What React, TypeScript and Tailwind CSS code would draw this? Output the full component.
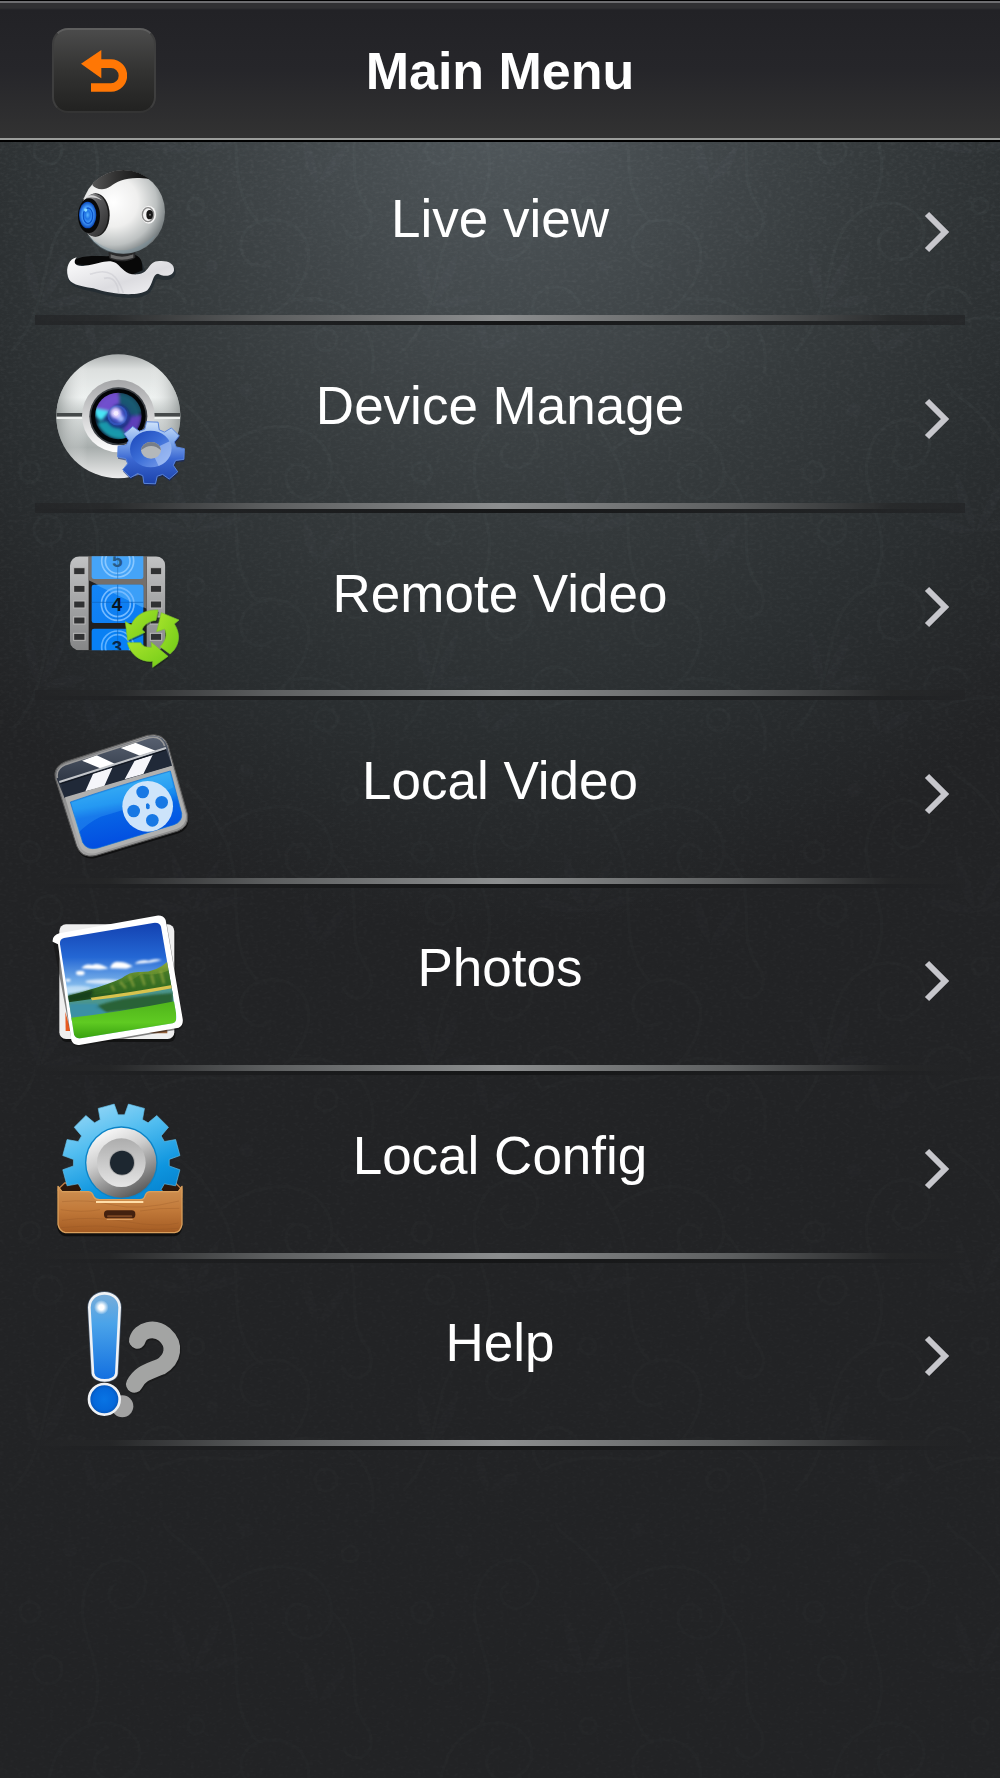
import React from "react";

type IconProps = { viewBox: string; children: React.ReactNode };

function IconFrame({ viewBox, children }: IconProps) {
  return (
    <svg viewBox={viewBox} className="size-40 shrink-0 overflow-visible" aria-hidden="true">
      {children}
    </svg>
  );
}

function gearPath(cx: number, cy: number, rIn: number, rOut: number, teeth: number, start: number, base = 0.3, tip = 0.21) {
  const step = (Math.PI * 2) / teeth;
  const pts: string[] = [];
  for (let i = 0; i < teeth; i++) {
    const a = start + i * step;
    const corners: [number, number][] = [
      [rIn, a - step * base],
      [rOut, a - step * tip],
      [rOut, a + step * tip],
      [rIn, a + step * base],
    ];
    corners.forEach(([r, t]) => pts.push(`${(cx + r * Math.cos(t)).toFixed(1)} ${(cy + r * Math.sin(t)).toFixed(1)}`));
  }
  return `M${pts.join("L")}Z`;
}

function WebcamIcon() {
  return (
    <IconFrame viewBox="0 5 480 480">
      <defs>
        <radialGradient id="wcBall" cx="38%" cy="38%" r="66%">
          <stop offset="0" stopColor="#fff" />
          <stop offset=".45" stopColor="#efefee" />
          <stop offset=".78" stopColor="#bdc1c1" />
          <stop offset="1" stopColor="#747b7d" />
        </radialGradient>
        <linearGradient id="wcCap" x1="0" y1="0" x2="1" y2="0">
          <stop offset="0" stopColor="#555" />
          <stop offset=".4" stopColor="#333" />
          <stop offset="1" stopColor="#0c0c0c" />
        </linearGradient>
        <linearGradient id="wcRing" x1="0" y1="0" x2="1" y2="1">
          <stop offset="0" stopColor="#bbb" />
          <stop offset=".4" stopColor="#5a5a5c" />
          <stop offset="1" stopColor="#2a2a2a" />
        </linearGradient>
        <radialGradient id="wcLens">
          <stop offset="0" stopColor="#5ab5ff" />
          <stop offset=".3" stopColor="#1f74e4" />
          <stop offset=".6" stopColor="#4aa3ff" />
          <stop offset="1" stopColor="#0a48b8" />
        </radialGradient>
        <linearGradient id="wcBase" x1="0" y1="0" x2="1" y2="1">
          <stop offset="0" stopColor="#fff" />
          <stop offset=".6" stopColor="#dcdce0" />
          <stop offset="1" stopColor="#f5f5f7" />
        </linearGradient>
        <clipPath id="wcClip"><circle cx="250" cy="185" r="126" /></clipPath>
      </defs>
      <path d="M84 388C70 352 86 326 112 319C160 310 250 312 292 318C310 330 304 350 318 358C332 352 338 336 352 334C382 326 404 340 403 362C400 384 366 386 352 378C338 376 340 410 320 424C290 444 220 436 160 418C118 409 92 404 84 388Z" fill="#222b31" opacity=".75" transform="translate(4 7)" />
      <path d="M100 342C100 322 130 315 200 318L286 314C308 322 306 342 308 360L268 376L230 350Z" fill="#080808" />
      <path d="M84 380C76 350 88 326 110 321C96 338 108 350 134 346C180 340 204 324 228 338C250 356 256 374 292 372C330 370 322 332 358 332C384 330 404 340 402 360C398 382 366 378 354 370C338 370 340 400 322 420C292 440 214 432 160 414C116 406 90 402 84 380Z" fill="url(#wcBase)" />
      <path d="M150 372C210 350 232 376 250 428M192 384C220 376 234 400 236 430" stroke="#c4c4ca" strokeWidth="5" fill="none" opacity=".45" />
      <path d="M205 306H286V322C260 338 224 334 208 324Z" fill="#29292a" />
      <path d="M212 312Q246 326 280 312V322Q246 334 212 322Z" fill="#6a6a6a" />
      <circle cx="250" cy="185" r="125" fill="url(#wcBall)" />
      <path d="M140 250Q240 350 350 250Q310 314 245 310Q180 310 140 250Z" fill="#7996a3" opacity=".35" />
      <g clipPath="url(#wcClip)">
        <path d="M157 104C160 66 220 50 260 54C300 56 326 70 328 86C270 76 232 90 212 108C190 124 166 116 157 104Z" fill="url(#wcCap)" />
      </g>
      <ellipse cx="167" cy="194" rx="42" ry="65" fill="#191919" />
      <ellipse cx="163" cy="194" rx="41" ry="64" fill="url(#wcRing)" />
      <path d="M128 146Q154 122 186 150Q156 134 128 146Z" fill="#e8e8e8" opacity=".8" />
      <ellipse cx="147" cy="196" rx="33" ry="52" fill="#090909" />
      <ellipse cx="143" cy="194" rx="26" ry="40" fill="url(#wcLens)" />
      <ellipse cx="144" cy="196" rx="14" ry="23" fill="none" stroke="#0d53c8" strokeWidth="4" />
      <circle cx="137" cy="179" r="5" fill="#8bdcff" />
      <ellipse cx="326" cy="193" rx="22" ry="27" fill="#f4f4f4" />
      <ellipse cx="324" cy="193" rx="17" ry="21" fill="none" stroke="#888" strokeWidth="4" />
      <ellipse cx="329" cy="193" rx="10" ry="14" fill="#161616" />
      <circle cx="330" cy="193" r="3" fill="#777" />
    </IconFrame>
  );
}

function DeviceIcon() {
  const gear = gearPath(333, 338, 78, 101, 8, 0.04, 0.36, 0.22);
  return (
    <IconFrame viewBox="0 -3 480 480">
      <defs>
        <linearGradient id="dvBody" x1="0" y1="0" x2="0" y2="1">
          <stop offset="0" stopColor="#a9adad" />
          <stop offset=".12" stopColor="#dcdfde" />
          <stop offset=".35" stopColor="#edf1f0" />
          <stop offset=".48" stopColor="#bcc2c1" />
          <stop offset=".52" stopColor="#d0d5d4" />
          <stop offset=".75" stopColor="#a7adac" />
          <stop offset="1" stopColor="#ececec" />
        </linearGradient>
        <linearGradient id="dvSide" x1="0" y1="0" x2="1" y2="0">
          <stop offset="0" stopColor="#8b9190" stopOpacity=".75" />
          <stop offset=".25" stopColor="#fff" stopOpacity="0" />
          <stop offset=".75" stopColor="#fff" stopOpacity="0" />
          <stop offset="1" stopColor="#8b9190" stopOpacity=".75" />
        </linearGradient>
        <linearGradient id="dvRing" x1="0" y1="0" x2="0" y2="1">
          <stop offset="0" stopColor="#a5a6a8" />
          <stop offset="1" stopColor="#fff" />
        </linearGradient>
        <radialGradient id="dvLens">
          <stop offset="0" stopColor="#b9a6ff" />
          <stop offset=".2" stopColor="#4655c8" />
          <stop offset=".5" stopColor="#17307d" />
          <stop offset=".8" stopColor="#175a78" />
          <stop offset="1" stopColor="#0b1930" />
        </radialGradient>
        <linearGradient id="dvGear" x1="0" y1="0" x2="0" y2="1">
          <stop offset="0" stopColor="#cfe3fb" />
          <stop offset=".3" stopColor="#86aeee" />
          <stop offset=".6" stopColor="#3b68d2" />
          <stop offset="1" stopColor="#1c43ac" />
        </linearGradient>
        <linearGradient id="dvGearIn" x1="0" y1="0" x2="1" y2="1">
          <stop offset="0" stopColor="#1945b8" />
          <stop offset=".5" stopColor="#3d6fd8" />
          <stop offset="1" stopColor="#83a6ee" />
        </linearGradient>
        <clipPath id="dvLensClip"><circle cx="235" cy="228" r="70" /></clipPath>
        <filter id="dvBlend"><feGaussianBlur stdDeviation="5" /></filter>
      </defs>
      <circle cx="235" cy="229" r="186" fill="url(#dvBody)" />
      <circle cx="235" cy="229" r="186" fill="url(#dvSide)" />
      <path d="M50 219H134V230H50ZM336 219H420V230H336Z" fill="#45494a" />
      <path d="M50 230H134V237H50ZM336 230H420V237H336Z" fill="#edf0ef" />
      <circle cx="235" cy="228" r="109" fill="url(#dvRing)" />
      <circle cx="235" cy="229" r="87" fill="#3b3f44" />
      <circle cx="235" cy="229" r="82" fill="#020406" />
      <circle cx="235" cy="228" r="70" fill="url(#dvLens)" />
      <g clipPath="url(#dvLensClip)">
        <g filter="url(#dvBlend)">
          <path d="M235 150A78 78 0 0 0 162 205L208 218Q218 194 238 192Z" fill="#7a4fd6" opacity=".9" />
          <path d="M165 205L208 214L186 240Q162 236 165 205Z" fill="#4ae4f5" />
          <path d="M238 156Q296 160 308 218L270 224Q264 196 238 192Z" fill="#1c5a70" opacity=".8" />
          <path d="M306 224Q300 280 262 290L248 266Q268 254 272 230Z" fill="#6a3cc4" opacity=".85" />
          <path d="M172 250Q200 304 262 298L242 266Q212 266 202 244Z" fill="#17a5b4" opacity=".85" />
        </g>
        <circle cx="232" cy="226" r="27" fill="none" stroke="#3558c0" strokeWidth="6" opacity=".8" />
        <g filter="url(#dvBlend)">
          <circle cx="227" cy="218" r="16" fill="#e0d0ff" />
          <circle cx="243" cy="236" r="9" fill="#a7bfff" />
        </g>
        <circle cx="228" cy="220" r="7" fill="#f4ecff" />
      </g>
      <g transform="translate(0 24) scale(1 .93)">
        <path d={gear} fill="#10256b" opacity=".6" transform="translate(1 6)" />
        <path d={gear} fill="url(#dvGear)" stroke="#5a86dc" strokeWidth="3" strokeLinejoin="round" />
      </g>
      <ellipse cx="332" cy="327" rx="62" ry="55" fill="url(#dvGearIn)" />
      <path d="M333 330L389 304A62 55 0 0 1 356 378Z" fill="#bcd3fb" opacity=".55" />
      <ellipse cx="333" cy="331" rx="30" ry="25" fill="#b4b8ba" />
      <path d="M303 331A30 25 0 0 1 363 331Q334 305 303 331Z" fill="#777e88" />
    </IconFrame>
  );
}

function RemoteVideoIcon() {
  const arrow = "M256 274L274 284C286 252 318 238 354 239L348 270C326 272 312 284 306 298L315 306L263 330Z";
  return (
    <IconFrame viewBox="0 -10 480 480">
      <defs>
        <linearGradient id="rvStrip" x1="0" y1="0" x2="0" y2="1">
          <stop offset="0" stopColor="#c2c3c4" />
          <stop offset="1" stopColor="#858687" />
        </linearGradient>
        <linearGradient id="rvBlue" x1="0" y1="0" x2="1" y2="1">
          <stop offset="0" stopColor="#1485f5" />
          <stop offset="1" stopColor="#0a7bf0" />
        </linearGradient>
        <linearGradient id="rvGreen" x1="0" y1="0" x2="1" y2="1">
          <stop offset="0" stopColor="#a8e42c" />
          <stop offset="1" stopColor="#72cb18" />
        </linearGradient>
        <clipPath id="rvClip"><rect x="90" y="78" width="286" height="282" rx="28" /></clipPath>
        <clipPath id="rvF1"><rect x="155" y="70" width="155" height="76" rx="7" /></clipPath>
        <clipPath id="rvF3"><rect x="155" y="295" width="155" height="76" rx="7" /></clipPath>
      </defs>
      <g clipPath="url(#rvClip)">
        <rect x="90" y="78" width="286" height="282" fill="url(#rvStrip)" />
        <rect x="146" y="78" width="174" height="282" fill="#211f1e" />
        <path d="M146 78H320V235L146 150Z" fill="#746f6b" />
        <rect x="155" y="70" width="155" height="76" rx="7" fill="#45a4f8" />
        <rect x="155" y="163" width="155" height="115" rx="7" fill="url(#rvBlue)" />
        <path d="M168 163H303Q310 163 310 170V232Z" fill="#3b9ff8" />
        <rect x="155" y="295" width="155" height="76" rx="7" fill="#0880f4" />
        <g clipPath="url(#rvF1)" fill="none" stroke="#8ac8ff" strokeWidth="5">
          <circle cx="233" cy="92" r="48" /><circle cx="233" cy="92" r="37" />
          <path d="M233 70V146" stroke="#2d78c0" strokeWidth="2" />
        </g>
        <g fill="none" stroke="#74baff" strokeWidth="5">
          <circle cx="233" cy="221" r="49" /><circle cx="233" cy="221" r="38" />
          <path d="M155 216H310M233 163V278" stroke="#0d64bd" strokeWidth="2" />
        </g>
        <g clipPath="url(#rvF3)" fill="none" stroke="#60b2ff" strokeWidth="5">
          <circle cx="233" cy="350" r="48" /><circle cx="233" cy="350" r="37" />
          <path d="M233 295V360" stroke="#0d64bd" strokeWidth="2" />
        </g>
        <g fontFamily="Liberation Sans, sans-serif" fontSize="56" fontWeight="bold" textAnchor="middle">
          <text x="232" y="110" fill="#285a86">5</text>
          <text x="231" y="241" fill="#081521">4</text>
          <text x="231" y="372" fill="#082648">3</text>
        </g>
        <g fill="#303132" stroke="#bababa" strokeWidth="3">
          {[112, 165, 212, 260, 309].map((y) => (
            <g key={y}>
              <rect x="101" y={y} width="34" height="21" />
              <rect x="331" y={y} width="34" height="21" />
            </g>
          ))}
        </g>
      </g>
      <g fill="#10220a" opacity=".45" transform="translate(3 5)">
        <path d={arrow} />
        <path d="M262 337H302C310 350 320 351 334 351V336L384 378L338 411V393C302 396 272 374 262 337Z" />
      </g>
      <g fill="url(#rvGreen)" stroke="#7cc62a" strokeWidth="2" strokeLinejoin="round">
        <path d={arrow} />
        <path d="M262 337H302C310 350 320 351 334 351V336L384 378L338 411V393C302 396 272 374 262 337Z" />
        <path d="M364 247L417 269L403 281C426 316 415 352 390 371L360 349C378 332 382 314 374 296L350 304Z" />
      </g>
    </IconFrame>
  );
}

function ClapperIcon() {
  return (
    <IconFrame viewBox="0 -4 480 480">
      <defs>
        <linearGradient id="clBlue" x1="0" y1="0" x2=".25" y2="1">
          <stop offset="0" stopColor="#43bdf6" />
          <stop offset=".48" stopColor="#168aef" />
          <stop offset=".6" stopColor="#0764e6" />
          <stop offset="1" stopColor="#024de0" />
        </linearGradient>
        <linearGradient id="clTop" x1="0" y1="0" x2="0" y2="1">
          <stop offset="0" stopColor="#626b7b" />
          <stop offset="1" stopColor="#1c2431" />
        </linearGradient>
        <linearGradient id="clRim" x1="0" y1="0" x2="1" y2="1">
          <stop offset="0" stopColor="#6c6c6c" />
          <stop offset=".5" stopColor="#a5a5a5" />
          <stop offset="1" stopColor="#858585" />
        </linearGradient>
        <clipPath id="clShape"><path d="M50 190Q42 158 76 146L325 64Q368 54 382 92L396 152L74 248Z" /></clipPath>
      </defs>
      <path d="M46 190Q38 154 76 139L322 60Q370 50 384 90L443 298Q448 333 414 347L166 421Q124 430 110 392Z" fill="#080808" opacity=".7" transform="translate(2 7)" />
      <path d="M46 190Q38 154 76 139L322 60Q370 50 384 90L443 298Q448 333 414 347L166 421Q124 430 110 392Z" fill="url(#clRim)" stroke="#555" strokeWidth="3" />
      <g clipPath="url(#clShape)">
        <path d="M40 140L400 30V170L60 260Z" fill="url(#clTop)" />
        <path d="M62 202L378 100L396 152L74 248Z" fill="#202938" />
        <path d="M126 136L170 120L226 146L184 160ZM242 98L286 82L347 106L300 121Z" fill="#fff" />
        <path d="M160 174L218 156L192 214L136 228ZM284 136L338 119L310 176L254 192Z" fill="#f5f6fa" />
        <path d="M58 200L378 98" stroke="#c3c6ca" strokeWidth="6" />
        <path d="M60 206L378 104" stroke="#11161e" strokeWidth="3" />
      </g>
      <path d="M52 188Q46 160 78 147L324 68Q362 58 374 92" fill="none" stroke="#999" strokeWidth="5" />
      <path d="M75 246L396 151L438 300Q440 330 410 341L168 413Q132 421 119 390Z" fill="#b0b0af" />
      <path d="M91 260Q230 212 391 167L425 294Q428 319 402 328L174 398Q140 406 128 381Z" fill="url(#clBlue)" stroke="#0a70d6" strokeWidth="2" />
      <path d="M94 262Q230 218 388 171L400 216Q280 280 182 304Q140 324 114 354Z" fill="#5ed1ff" opacity=".2" />
      <circle cx="323" cy="273" r="76" fill="#cde4fa" />
      <g fill="#1778e4">
        <circle cx="308" cy="230" r="19" />
        <circle cx="365" cy="261" r="19" />
        <circle cx="337" cy="315" r="19" />
        <circle cx="281" cy="287" r="19" />
        <path d="M318 267Q324 259 329 270V279Q322 286 318 277Z" />
      </g>
    </IconFrame>
  );
}

function PhotosIcon() {
  return (
    <IconFrame viewBox="0 2 480 480">
      <defs>
        <linearGradient id="phSky" x1="0" y1="0" x2="0" y2="1">
          <stop offset="0" stopColor="#123fae" />
          <stop offset=".3" stopColor="#2467d4" />
          <stop offset=".6" stopColor="#a0d4f4" />
        </linearGradient>
        <linearGradient id="phHill" x1="0" y1="0" x2="0" y2="1">
          <stop offset="0" stopColor="#8faa38" />
          <stop offset=".5" stopColor="#3d7426" />
          <stop offset="1" stopColor="#18451b" />
        </linearGradient>
        <linearGradient id="phGrass" x1="0" y1="0" x2="0" y2="1">
          <stop offset="0" stopColor="#4fb31b" />
          <stop offset=".5" stopColor="#5fca22" />
          <stop offset="1" stopColor="#2b9409" />
        </linearGradient>
        <clipPath id="phClip"><path d="M60 132Q58 117 72 113L344 67Q359 66 363 79L410 349Q410 365 398 369L122 414Q106 416 102 402Z" /></clipPath>
        <filter id="phSoft"><feGaussianBlur stdDeviation="3" /></filter>
      </defs>
      <rect x="60" y="75" width="344" height="344" rx="18" fill="#080808" opacity=".6" transform="translate(2 6)" />
      <rect x="58" y="72" width="345" height="344" rx="20" fill="#efefef" />
      <path d="M76 334L92 392L77 392Z" fill="#e65a20" />
      <path d="M320 397L382 384V399H340Z" fill="#95613b" />
      <path d="M38 124Q36 106 58 99L350 46Q370 44 377 59L428 355Q431 374 416 382L122 433Q100 437 94 420Z" fill="#111" opacity=".5" transform="translate(2 5)" />
      <path d="M38 124Q36 106 58 99L350 46Q370 44 377 59L428 355Q431 374 416 382L122 433Q100 437 94 420L54 132Z" fill="#fff" />
      <g clipPath="url(#phClip)">
        <rect x="50" y="60" width="370" height="370" fill="url(#phSky)" />
        <g fill="#fff" filter="url(#phSoft)">
          <path d="M124 204Q135 188 158 194Q173 185 205 204Q190 211 124 204ZM210 204Q216 181 238 185Q255 184 278 198L260 205ZM284 190Q300 177 326 181Q344 173 366 179Q340 188 284 190Z" />
          <ellipse cx="121" cy="218" rx="13" ry="7" /><ellipse cx="190" cy="244" rx="54" ry="7" opacity=".7" />
          <ellipse cx="110" cy="268" rx="45" ry="12" opacity=".4" /><ellipse cx="84" cy="240" rx="8" ry="4" />
        </g>
        <path d="M80 288Q122 278 144 270Q212 250 245 234Q272 212 302 215Q350 215 382 184L410 280L90 315Z" fill="url(#phHill)" />
        <path d="M160 280Q250 262 304 220Q350 228 390 208L400 255L270 274Z" fill="#356d22" opacity=".65" />
        <g filter="url(#phSoft)">
          <path d="M240 244l18 20M268 226l14 34M302 219l12 36M334 222l8 30M362 212l10 38M214 255l9 16" stroke="#b3b94b" strokeWidth="8" opacity=".5" />
          <path d="M80 286Q130 276 160 268L150 296L86 304Z" fill="#17401c" />
        </g>
        <path d="M86 306Q250 284 400 258V340L90 365Z" fill="#4c968e" />
        <path d="M165 320Q220 292 398 278V318L200 336Z" fill="#285c2d" opacity=".9" filter="url(#phSoft)" />
        <path d="M90 310H170L210 350H90Z" fill="#348eb0" opacity=".7" filter="url(#phSoft)" />
        <path d="M152 292Q280 275 396 254V264Q270 288 156 300Z" fill="#d8c34d" />
        <path d="M88 353Q240 335 408 302V430H90Z" fill="url(#phGrass)" />
      </g>
    </IconFrame>
  );
}

function ConfigIcon() {
  return (
    <IconFrame viewBox="0 -4 480 480">
      <defs>
        <linearGradient id="cfGear" x1="0" y1="0" x2=".4" y2="1">
          <stop offset="0" stopColor="#a5ddf8" />
          <stop offset=".4" stopColor="#51bdf0" />
          <stop offset=".75" stopColor="#0e95df" />
          <stop offset="1" stopColor="#0580cc" />
        </linearGradient>
        <linearGradient id="cfRing" x1=".2" y1="0" x2=".7" y2="1">
          <stop offset="0" stopColor="#fff" />
          <stop offset=".4" stopColor="#cecece" />
          <stop offset="1" stopColor="#555" />
        </linearGradient>
        <linearGradient id="cfInner" x1="0" y1="0" x2="0" y2="1">
          <stop offset="0" stopColor="#adadad" />
          <stop offset="1" stopColor="#e5e5e5" />
        </linearGradient>
        <linearGradient id="cfWood" x1="0" y1="0" x2="0" y2="1">
          <stop offset="0" stopColor="#cf9153" />
          <stop offset=".5" stopColor="#c27a3a" />
          <stop offset="1" stopColor="#a35b23" />
        </linearGradient>
        <clipPath id="cfTop"><rect x="40" y="30" width="400" height="297" /></clipPath>
      </defs>
      <path d="M55 296L74 278H406L425 296V320H55Z" fill="#2c170b" stroke="#bd7b43" strokeWidth="4" />
      <g clipPath="url(#cfTop)">
        <path d={gearPath(244, 217, 144, 177, 12, Math.PI / 12, 0.37, 0.27)} fill="url(#cfGear)" stroke="#63bce6" strokeWidth="2" strokeLinejoin="round" />
        <circle cx="244" cy="217" r="109" fill="#0b83c6" />
        <circle cx="244" cy="217" r="105" fill="url(#cfRing)" />
        <circle cx="244" cy="217" r="73" fill="url(#cfInner)" />
        <circle cx="246" cy="217" r="39" fill="#aaa" />
        <circle cx="246" cy="217" r="36" fill="#1d2730" />
      </g>
      <path d="M52 297H146L162 327H312L328 304H427V407Q423 430 402 433H75Q56 428 52 407Z" fill="#080808" opacity=".75" transform="translate(0 5)" />
      <path d="M54 288L66 304H146Q157 305 161 319Q166 328 178 328H300Q312 328 315 317Q319 304 330 304H415L426 288V402Q422 425 404 427H76Q58 423 54 402Z" fill="url(#cfWood)" stroke="#d99f5c" strokeWidth="4" strokeLinejoin="round" />
      <g fill="none" stroke="#8e5125" strokeWidth="3" opacity=".28">
        <path d="M66 334Q146 326 220 344T417 332M62 358Q126 368 180 358M300 362Q360 352 418 354M66 390Q160 376 260 394T416 398M62 412Q180 402 250 412T416 414" />
      </g>
      <path d="M168 335H310" stroke="#ffdfaa" strokeWidth="6" />
      <rect x="192" y="360" width="94" height="24" rx="11" fill="#43210f" />
      <path d="M204 378H274" stroke="#7d4824" strokeWidth="6" strokeLinecap="round" />
      <path d="M200 387H278" stroke="#e0a56a" strokeWidth="3" />
    </IconFrame>
  );
}

function HelpIcon() {
  return (
    <IconFrame viewBox="0 4 480 480">
      <defs>
        <linearGradient id="hpBar" x1="0" y1="0" x2="0" y2="1">
          <stop offset="0" stopColor="#79add9" />
          <stop offset=".35" stopColor="#4aa3e9" />
          <stop offset="1" stopColor="#126fe0" />
        </linearGradient>
        <radialGradient id="hpDot">
          <stop offset="0" stopColor="#0874e4" />
          <stop offset=".7" stopColor="#0568da" />
          <stop offset="1" stopColor="#0753b4" />
        </radialGradient>
        <radialGradient id="hpGlow">
          <stop offset=".35" stopColor="#fff" />
          <stop offset="1" stopColor="#fff" stopOpacity="0" />
        </radialGradient>
      </defs>
      <circle cx="247" cy="395" r="33" fill="#a2a2a2" />
      <path d="M292 197C300 165 344 155 374 180C408 210 400 254 362 276C324 292 300 296 283 329" fill="none" stroke="#111" strokeWidth="52" strokeLinecap="round" opacity=".5" transform="translate(2 4)" />
      <path d="M292 197C300 165 344 155 374 180C408 210 400 254 362 276C324 292 300 296 283 329" fill="none" stroke="#a3a4a3" strokeWidth="50" strokeLinecap="round" />
      <path d="M148 98C150 42 237 42 239 98L229 296C226 324 163 324 159 296Z" fill="url(#hpBar)" stroke="#4b5c70" strokeWidth="12" />
      <path d="M148 98C150 42 237 42 239 98L229 296C226 324 163 324 159 296Z" fill="url(#hpBar)" stroke="#f0f2f5" strokeWidth="8" />
      <circle cx="184" cy="98" r="22" fill="url(#hpGlow)" />
      <circle cx="193" cy="374" r="46" fill="url(#hpDot)" stroke="#eff1f4" strokeWidth="8" />
    </IconFrame>
  );
}

function Backdrop() {
  return (
    <svg className="pointer-events-none absolute inset-0 size-full" aria-hidden="true">
      <defs>
        <pattern id="damask" width="392" height="380" patternUnits="userSpaceOnUse">
          <g fill="none" stroke="#8b999c" strokeWidth="3" strokeLinecap="round">
            <path d="M12 350C60 300 30 230 88 206C132 190 160 240 122 258C94 268 84 232 108 228" />
            <path d="M88 206C120 140 60 110 92 56C118 20 164 52 138 82C118 100 98 74 116 64" />
            <path d="M150 330C210 300 252 340 290 300C330 250 300 210 258 222C226 236 244 278 270 262" />
            <path d="M290 300C350 290 380 330 372 372M258 222C220 180 250 120 220 70C196 20 170 20 164 4" />
            <path d="M220 70C270 30 330 44 332 92C330 128 284 126 286 94C292 76 314 86 308 98" />
            <path d="M332 92C372 130 340 170 366 206C384 232 352 250 344 228M150 330C120 290 172 272 186 302" />
            <circle cx="30" cy="92" r="10" /><circle cx="48" cy="150" r="14" /><circle cx="196" cy="206" r="8" />
            <circle cx="350" cy="34" r="8" /><circle cx="326" cy="340" r="11" />
          </g>
          <g fill="#8b999c" opacity=".7">
            <path d="M192 152Q170 130 172 92Q188 116 192 152Q202 116 220 98Q216 132 192 152Q222 132 246 138Q222 152 192 152Q164 156 142 142Q164 134 192 152Z" />
            <path d="M40 306Q22 286 26 250Q40 272 40 306Q48 270 66 252Q64 286 40 306Q70 290 88 298Q64 312 40 306Z" />
            <path d="M318 184Q300 164 304 138Q318 156 318 184Q328 156 346 146Q342 172 318 184Z" />
            <path d="M96 352Q80 334 86 314Q98 330 96 352Q112 330 128 332Q118 350 96 352Z" />
            <circle cx="246" cy="10" r="7" /><circle cx="70" cy="30" r="7" /><circle cx="212" cy="266" r="6" />
          </g>
        </pattern>
        <filter id="grain" x="0" y="0" width="100%" height="100%">
          <feTurbulence type="fractalNoise" baseFrequency=".22 .35" numOctaves="2" seed="4" />
          <feColorMatrix values="0 0 0 0 .65 0 0 0 0 .7 0 0 0 0 .72 1.2 0 0 0 -.5" />
        </filter>
        <linearGradient id="fade" x1="0" y1="0" x2="0" y2="1">
          <stop offset="0" stopColor="#fff" />
          <stop offset=".5" stopColor="#fff" stopOpacity=".4" />
          <stop offset="1" stopColor="#fff" stopOpacity=".28" />
        </linearGradient>
        <mask id="fadeMask"><rect width="100%" height="100%" fill="url(#fade)" /></mask>
      </defs>
      <g mask="url(#fadeMask)">
        <rect width="100%" height="100%" fill="url(#damask)" opacity=".06" />
        <rect width="100%" height="100%" filter="url(#grain)" opacity=".13" />
      </g>
    </svg>
  );
}

const items = [
  { label: "Live view", Icon: WebcamIcon },
  { label: "Device Manage", Icon: DeviceIcon },
  { label: "Remote Video", Icon: RemoteVideoIcon },
  { label: "Local Video", Icon: ClapperIcon },
  { label: "Photos", Icon: PhotosIcon },
  { label: "Local Config", Icon: ConfigIcon },
  { label: "Help", Icon: HelpIcon },
];

export default function App() {
  return (
    <div className="relative min-h-screen bg-[#222325] bg-[radial-gradient(ellipse_740px_820px_at_50%_110px,#50575b_0%,#43494c_25%,#353a3c_50%,#2a2e30_76%,#222325_100%)] font-['Liberation_Sans',Arial,sans-serif] text-white">
      <Backdrop />
      <header className="relative z-10 border-t border-black bg-black pb-0.5">
        <div className="grid grid-cols-[1fr_auto_1fr] items-center border-t-2 border-b-2 border-t-[#6e6e70] border-b-[#9b9d9b] bg-[linear-gradient(#303032_0px,#303032_5px,#222226_7px,#26262a_50%,#323232_100%)] px-[52px] py-[25px]">
          <button
            type="button"
            aria-label="Back"
            className="flex h-[85px] w-[104px] items-center justify-center rounded-2xl border-2 border-x-[#3e3e3e] border-t-[#5e5e5e] border-b-[#343434] bg-linear-to-b from-[#4b4b4b] via-[#333332] to-[#222221]"
          >
            <svg width="46" height="42" viewBox="0 0 138 126" aria-hidden="true">
              <path d="M0 41L61 0V28H90A48 48 0 0 1 90 125H30V100H90A23 23 0 0 0 90 54H61V85Z" fill="#ff7705" />
            </svg>
          </button>
          <h1 className="text-[52px] leading-[60px] font-bold">Main Menu</h1>
        </div>
      </header>
      <nav aria-label="Main Menu" className="relative">
        <ul className="-mt-1 grid min-h-[1312px] auto-rows-fr">
          {items.map(({ label, Icon }) => (
            <li key={label} className="flex flex-col">
              <a href="#" className="flex flex-1 items-center px-10 pt-2.5">
                <Icon />
                <span className="flex-1 pb-[26px] text-center text-[53px] leading-[60px] whitespace-nowrap">{label}</span>
                <span className="flex w-40 justify-end pr-2.5">
                  <svg width="26" height="42" viewBox="0 0 26 42" aria-hidden="true">
                    <path d="M3 3L21 21L3 39" fill="none" stroke="#c7c7cc" strokeWidth="6" />
                  </svg>
                </span>
              </a>
              <div className="mx-[35px] h-2.5" aria-hidden="true">
                <div className="h-1.5 bg-[linear-gradient(90deg,#222325b3_0%,#262728b3_8%,#5c5e5f_25%,#8c8e8f_50%,#5c5e5f_75%,#262728b3_92%,#222325b3_100%)]" />
                <div className="h-1 bg-linear-to-r from-[#222325b3] via-[#151617] to-[#222325b3]" />
              </div>
            </li>
          ))}
        </ul>
      </nav>
    </div>
  );
}
